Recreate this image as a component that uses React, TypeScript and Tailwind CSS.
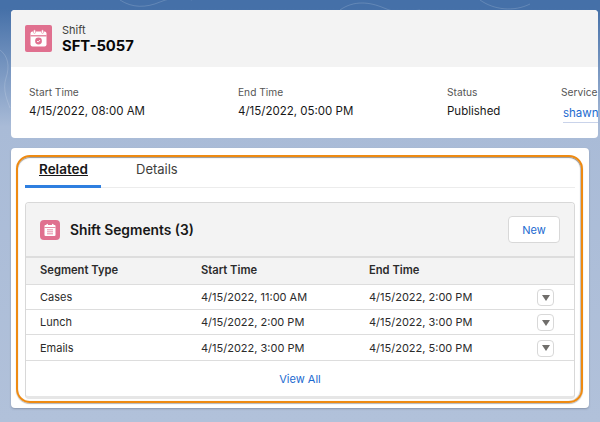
const fields = [
  { label: "Start Time", value: "4/15/2022, 08:00 AM", width: "w-[209px]" },
  { label: "End Time", value: "4/15/2022, 05:00 PM", width: "w-[209px]" },
  { label: "Status", value: "Published", width: "w-[114px]" },
];

const rows = [
  { type: "Cases", start: "4/15/2022, 11:00 AM", end: "4/15/2022, 2:00 PM", height: "h-[25px]" },
  { type: "Lunch", start: "4/15/2022, 2:00 PM", end: "4/15/2022, 3:00 PM", height: "h-[25px]" },
  { type: "Emails", start: "4/15/2022, 3:00 PM", end: "4/15/2022, 5:00 PM", height: "h-[26px]" },
];

function ShiftIcon() {
  return (
    <div className="w-[27px] h-[27px] rounded-[2px] bg-[#e0708f] flex items-center justify-center shrink-0">
      <svg width="19" height="19" viewBox="0 0 19 19" fill="none">
        <rect x="1.5" y="2.5" width="16" height="15" rx="2" fill="#fff" />
        <rect x="1.5" y="6.2" width="16" height="1.2" fill="#e0708f" />
        <rect x="4.5" y="0.8" width="2" height="3.6" rx="1" fill="#fff" stroke="#e0708f" strokeWidth="0.5" />
        <rect x="12.5" y="0.8" width="2" height="3.6" rx="1" fill="#fff" stroke="#e0708f" strokeWidth="0.5" />
        <circle cx="9.5" cy="12" r="3.4" fill="#e0708f" />
        <path d="M8 12l1.1 1.1 2-2.1" stroke="#fff" strokeWidth="0.9" />
      </svg>
    </div>
  );
}

function SegmentIcon() {
  return (
    <div className="w-5 h-5 rounded-[4px] bg-[#e0708f] flex items-center justify-center shrink-0">
      <svg width="14" height="14" viewBox="0 0 14 14" fill="none">
        <rect x="1.5" y="2" width="11" height="11" rx="1" fill="#fff" />
        <rect x="3.5" y="0.8" width="1.4" height="2.6" rx="0.7" fill="#fff" />
        <rect x="9.1" y="0.8" width="1.4" height="2.6" rx="0.7" fill="#fff" />
        <path d="M1.5 4.5h11M4 6.8h6M4 8.8h6M4 10.8h6" stroke="#e0708f" strokeWidth="0.8" />
      </svg>
    </div>
  );
}

export default function App() {
  return (
    <div className="relative w-[600px] h-[422px] overflow-hidden bg-gradient-to-b from-[#4570a8] from-[2%] via-[#a9bbd7] via-[30%] to-[#b1c1da] font-['Inter','Liberation_Sans',sans-serif] text-[#181818]">
      {/* Topographic lines of the page background */}
      <svg className="absolute left-0 top-0" width="600" height="140" viewBox="0 0 600 140" fill="none" stroke="#ffffff" strokeOpacity="0.16">
        <path d="M120 0c12 8 26 8 40 2s26-4 32-2M340 10c14-10 30-8 44-2s20 4 36 2M480 0c14 10 34 12 50 4M0 50c8 6 10 16 6 28s2 24 4 30" />
      </svg>

      <div className="relative pt-[10px] pl-[11px]">
        {/* Record header */}
        <section className="w-[587px] h-[128px] bg-white rounded-[4px] overflow-hidden">
          <div className="h-[57px] bg-[#f3f3f3] flex items-center gap-[10px] pl-[14px] pb-[1px]">
            <ShiftIcon />
            <div className="pt-[3px]">
              <p className="text-[11px] leading-[13px] text-[#3e3e3c]">Shift</p>
              <h1 className="text-[14.8px] leading-[18px] font-bold text-[#080707]">SFT-5057</h1>
            </div>
          </div>
          <div className="flex pl-[18px] pt-[18px]">
            {fields.map((field) => (
              <div key={field.label} className={`${field.width} shrink-0`}>
                <p className="text-[10.2px] leading-[14px] text-[#555]">{field.label}</p>
                <p className="mt-[3px] text-[11.5px] leading-[18px] text-[#181818]">{field.value}</p>
              </div>
            ))}
            <div className="shrink-0">
              <p className="text-[10.2px] leading-[14px] text-[#555]">Service</p>
              <p className="mt-[5px] ml-[2px] text-[11.5px] leading-[18px] text-[#1b6ad0] border-b border-[#c9d3ea] w-[36px]">shawn</p>
            </div>
          </div>
        </section>

        {/* Related panel */}
        <section className="mt-[10px] w-[578px] h-[260px] bg-white rounded-[4px] pt-[7px] pl-[5px] shadow-[0_1px_2px_rgba(60,70,90,0.35)]">
          <div className="w-[567px] h-[248px] border-2 border-[#ee8a12] rounded-[14px] pl-[7px] shadow-[inset_0_1px_1px_rgba(70,70,70,0.55),inset_-1px_0_1px_rgba(70,70,70,0.3),0_1px_1px_rgba(70,70,70,0.4)]">
            {/* Tabs */}
            <div className="flex w-[550px] h-[31px] border-b border-[#ececec]">
              <div className="w-[76px] h-[31px] border-b-[3px] border-[#2f7fe0] pl-[14px] pt-[3px]">
                <span className="text-[13.5px] leading-[18px] font-semibold underline text-[#181818] block">Related</span>
              </div>
              <span className="ml-[35px] pt-[3px] text-[13px] leading-[18px] text-[#3e3e3c]">Details</span>
            </div>

            {/* Related list */}
            <div className="mt-[14px] w-[550px] h-[197px] border border-[#d8d8d8] border-b-[3px] border-b-[#e6e6e6] rounded-[4px] overflow-hidden">
              <div className="h-[55px] bg-[#f3f3f3] flex items-center pl-[14px] pr-[14px] border-b-2 border-[#dddddd]">
                <SegmentIcon />
                <h2 className="ml-[10px] pt-[1px] text-[13.8px] font-semibold text-[#181818]">Shift Segments (3)</h2>
                <button className="ml-auto w-[52px] h-[27px] pt-[1px] bg-white border border-[#d8d8d8] rounded-[4px] text-[11px] text-[#1b6ad0]">New</button>
              </div>
              <div className="flex items-center h-[27px] pb-[2px] bg-[#f3f3f3] border-b border-[#dddddd] pl-[14px] text-[11.2px] font-semibold text-[#2b2b2b]">
                <span className="w-[161px]">Segment Type</span>
                <span className="w-[168px]">Start Time</span>
                <span>End Time</span>
              </div>
              {rows.map((row) => (
                <div key={row.type} className={`flex items-center ${row.height} pt-[1px] border-b border-[#dddddd] pl-[14px] text-[11px] text-[#2b2b2b]`}>
                  <span className="w-[161px]">{row.type}</span>
                  <span className="w-[168px]">{row.start}</span>
                  <span className="w-[168px]">{row.end}</span>
                  <button className="w-[17px] h-[17px] bg-white border border-[#d8d8d8] rounded-[4px] flex items-center justify-center">
                    <span className="w-0 h-0 border-l-[4.5px] border-r-[4.5px] border-t-[6px] border-l-transparent border-r-transparent border-t-[#706e6b]" />
                  </button>
                </div>
              ))}
              <div className="flex items-center justify-center h-[36px] pt-[1px] text-[11px] text-[#1b6ad0]">View All</div>
            </div>
          </div>
        </section>
      </div>
    </div>
  );
}
